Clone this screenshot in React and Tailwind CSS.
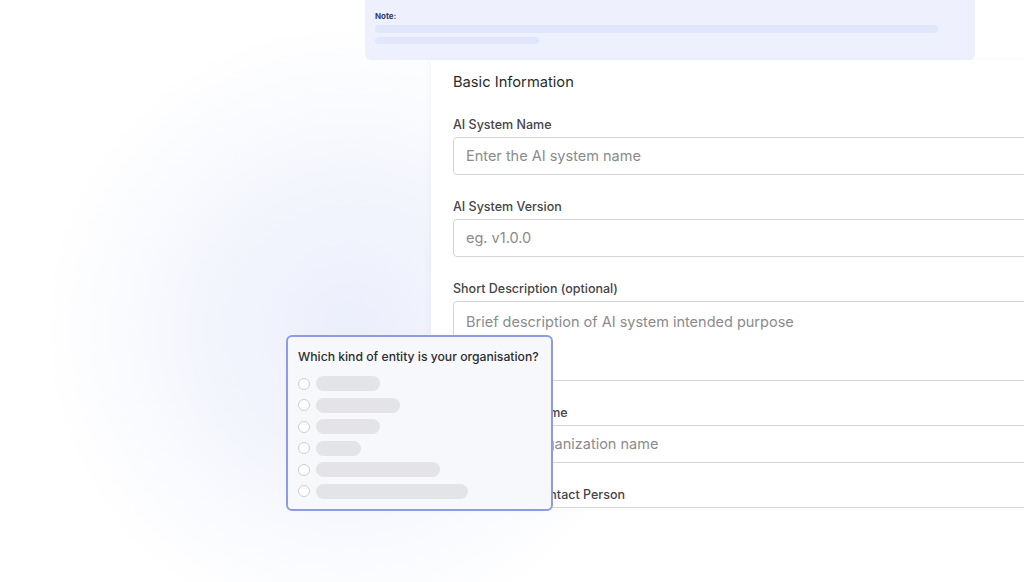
const OPTION_WIDTHS = [64, 84, 64, 45, 124, 152];

function Field({ label, placeholder, tall }) {
  return (
    <div className="flex flex-col">
      <label className="text-[12.5px] leading-[20px] text-[#454548] font-medium">{label}</label>
      <div className={`mt-[2px] rounded-[4px] border border-[#d4d4d6] bg-white pl-[12px] ${tall ? 'h-[80px] pt-[7px]' : 'h-[38px] flex items-center'}`}>
        <span className="text-[14.5px] leading-[20px] text-[#8b8b8e] whitespace-nowrap">{placeholder}</span>
      </div>
    </div>
  );
}

export default function App() {
  return (
    <div
      className="relative w-[1024px] h-[582px] overflow-hidden bg-white bg-[radial-gradient(circle_at_350px_330px,#eceffc_0px,#f3f5fd_140px,#fafbfe_230px,#ffffff_310px)]"
      style={{ fontFamily: 'Inter, "Noto Sans", sans-serif' }}
    >
      {/* Note banner */}
      <div className="ml-[365px] w-[610px] h-[60px] rounded-b-[6px] bg-[#eef1fd] px-[10px] pt-[11px]">
        <div className="text-[8px] leading-[10px] font-bold text-[#34386a]">Note:</div>
        <div className="mt-[4px] w-[563px] h-[8px] rounded-full bg-[#e0e7fb]" />
        <div className="mt-[4px] w-[164px] h-[7px] rounded-full bg-[#e0e7fb]" />
      </div>

      {/* Form card, runs past the right edge */}
      <div className="ml-[431px] w-[700px] h-[449px] overflow-hidden bg-white pl-[22px] pt-[12px] shadow-[-2px_0_6px_rgba(120,130,180,0.06)]">
        <h2 className="text-[14.7px] leading-[20px] font-normal text-[#2b2b2b]">Basic Information</h2>
        <div className="mt-[23px] flex flex-col gap-[22px]">
          <Field label="AI System Name" placeholder="Enter the AI system name" />
          <Field label="AI System Version" placeholder="eg. v1.0.0" />
          <Field label="Short Description (optional)" placeholder="Brief description of AI system intended purpose" tall />
          <Field label="Organization Name" placeholder="Enter the organization name" />
          <Field label="Organization Contact Person" placeholder="Enter the contact person" />
        </div>
      </div>

      {/* Floating question card */}
      <div className="absolute left-[286px] top-[335px] w-[267px] h-[176px] rounded-[6px] border-2 border-[#8c9be2] bg-[#f7f8fc] px-[10px] pt-[10px]">
        <div className="text-[12.2px] leading-[20px] font-medium text-[#2d2d30] whitespace-nowrap">
          Which kind of entity is your organisation?
        </div>
        <div className="mt-[9px] flex flex-col gap-[6.5px]">
          {OPTION_WIDTHS.map((w, i) => (
            <div key={i} className="flex items-center gap-[6px]">
              <span className="w-[12px] h-[12px] rounded-full border border-[#cfcfd3] bg-white" />
              <span className="h-[15px] rounded-full bg-[#e4e4e7]" style={{ width: w }} />
            </div>
          ))}
        </div>
      </div>
    </div>
  );
}
